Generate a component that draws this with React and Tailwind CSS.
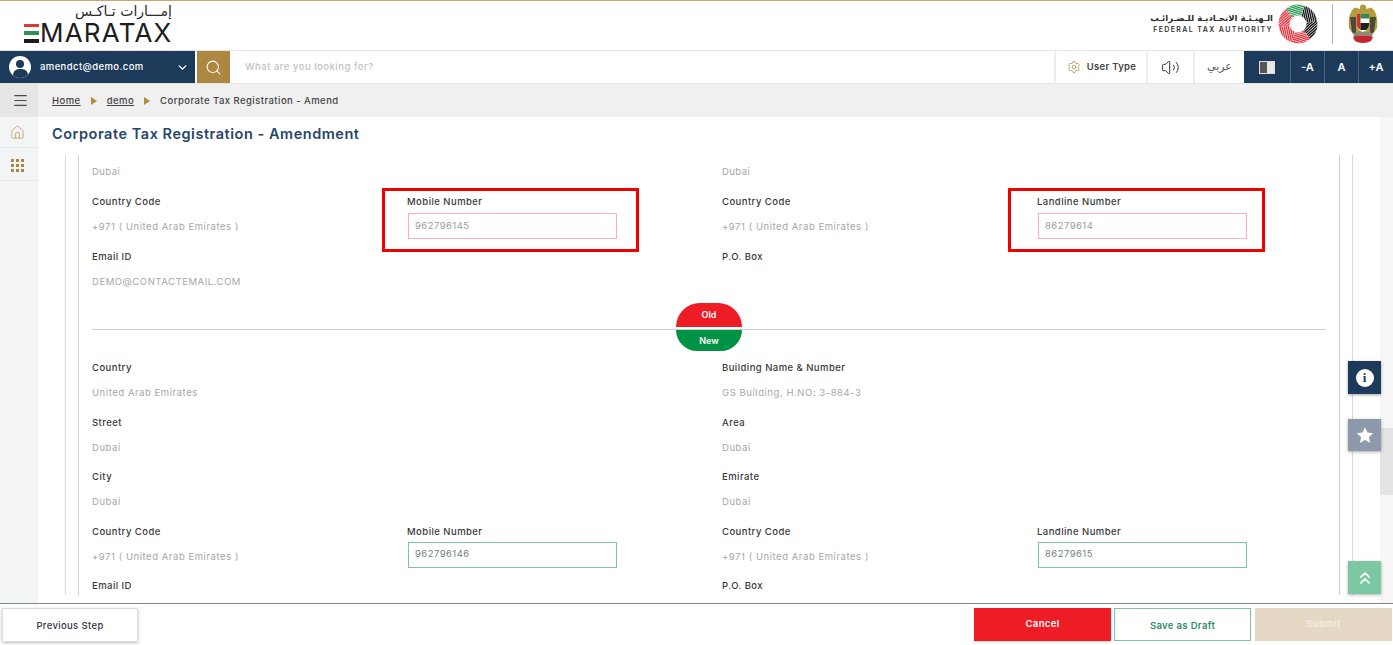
import React from "react";
import { ChevronDown, ChevronsUp, Home, Menu, Search, Settings, Volume2 } from "lucide-react";

const font = "font-['Inter','Liberation_Sans',sans-serif]";

function FtaRing() {
  // six striped sectors of the authority's ring
  const sectors = [
    { color: "#161616", rot: 20 },
    { color: "#161616", rot: 80 },
    { color: "#e8343f", rot: 140 },
    { color: "#e8343f", rot: 200 },
    { color: "#e8343f", rot: 260 },
    { color: "#2e9a5a", rot: 320 },
  ];
  const stripes = [-8, -6, -4, -2, 0, 2, 4, 6, 8, 10, 12, 14, 16, 18, 20, 22, 24, 26];
  return (
    <svg width="40" height="40" viewBox="0 0 40 40">
      <defs>
        <clipPath id="fta-sector">
          <path d="M20 20 L20 -6 L42.5 7 Z" />
        </clipPath>
        <clipPath id="fta-disc">
          <circle cx="20" cy="20" r="19.5" />
        </clipPath>
      </defs>
      <g clipPath="url(#fta-disc)">
        {sectors.map((s) => (
          <g key={s.rot} transform={`rotate(${s.rot} 20 20)`}>
            <g clipPath="url(#fta-sector)">
              <g transform="rotate(58 20 20)" stroke={s.color} strokeWidth="1.4">
                {stripes.map((y) => (
                  <path key={y} d={`M-10 ${y} H50`} />
                ))}
              </g>
            </g>
          </g>
        ))}
      </g>
      <circle cx="20" cy="20" r="8.5" fill="#ffffff" />
    </svg>
  );
}

function Emblem() {
  return (
    <svg width="32" height="40" viewBox="0 0 32 40">
      <path d="M16 0.5 C13.5 0.5 12.5 2.5 13 5 L8 3.5 C3 6.5 1 14 2 24 L6 30 L26 30 L30 24 C31 14 29 6.5 24 3.5 L19 5 C19.5 2.5 18.5 0.5 16 0.5 Z" fill="#b59a3f" />
      <path d="M3 13 L9 13 L9 30 L5 28 Z M29 13 L23 13 L23 30 L27 28 Z" fill="#4c4a38" />
      <path d="M10 10 H22 V21 C22 25 19 27 16 28 C13 27 10 25 10 21 Z" fill="#ffffff" />
      <path d="M10 10 H13.5 V26 C11.5 25 10 23 10 21 Z" fill="#cf2e2e" />
      <path d="M13.5 10 H22 V14.5 H13.5 Z" fill="#2e8b4f" />
      <path d="M13.5 19 H22 V21 C22 23 21 24.5 19.5 26 H13.5 Z" fill="#222222" />
      <path d="M6 29 C10 27.5 22 27.5 26 29 L25 33 C21 31 11 31 7 33 Z" fill="#8a8a7a" />
      <path d="M6 33 C11 31 21 31 26 33 L24 37 C20 39.5 12 39.5 8 37 Z" fill="#c0282d" />
    </svg>
  );
}

function Field({ label, value, input, highlight }) {
  return (
    <div className="relative h-[54.5px] pt-[3px]">
      {highlight && <div className={`absolute top-[-4px] w-[257px] h-[64px] border-[3px] border-[#f00000] ${highlight}`} />}
      {label && <div className="text-[9.5px] leading-[14px] tracking-[0.45px] text-[#3a3a3a] font-medium">{label}</div>}
      {input === "old" && (
        <div className="mt-[4px] ml-px w-[209px] h-[26px] border border-[#f7b0b5] flex items-center pl-[6px] text-[9.5px] tracking-[0.45px] text-[#9a9a9a]">
          {value}
        </div>
      )}
      {input === "new" && (
        <div className="mt-[3px] ml-px w-[209px] h-[26px] border border-[#7cc4a2] flex items-center pl-[6px] text-[9.5px] tracking-[0.45px] text-[#6f7f7a]">
          {value}
        </div>
      )}
      {!input && value && <div className="mt-[11px] text-[9.5px] leading-[14px] tracking-[0.55px] text-[#a6a6a6]">{value}</div>}
    </div>
  );
}

function Row({ children }) {
  return <div className="grid grid-cols-[315px_315px_315px_1fr]">{children}</div>;
}

function Contact({ mobile, landline, kind, highlight }) {
  return (
    <Row>
      <Field label="Country Code" value="+971 ( United Arab Emirates )" />
      <Field label="Mobile Number" value={mobile} input={kind} highlight={highlight ? "left-[-25px]" : null} />
      <Field label="Country Code" value="+971 ( United Arab Emirates )" />
      <Field label="Landline Number" value={landline} input={kind} highlight={highlight ? "left-[-29px]" : null} />
    </Row>
  );
}

export default function App() {
  return (
    <div className={`${font} relative w-[1393px] h-[645px] overflow-hidden bg-white flex flex-col`}>
      <div className="h-px bg-[#c9a671]" />

      {/* logos */}
      <header className="h-[49px] flex justify-between pl-[24px] pr-[14px]">
        <div className="w-[148px] pt-[3px] flex flex-col items-end">
          <div className="font-['DejaVu_Sans',sans-serif] text-[14px] leading-[14px] text-[#2b2b2b]" dir="rtl">
            إمـــارات تـاكـس
          </div>
          <div className="mt-[3px] flex items-center h-[24px] w-full">
            <div className="w-[15px] h-[19px] flex flex-col justify-between mr-px shrink-0">
              <div className="h-[3.5px] bg-[#e0343c]" />
              <div className="h-[3.5px] bg-[#2f8f55]" />
              <div className="h-[3.5px] bg-[#1c1c1c]" />
            </div>
            <span className="text-[26px] leading-[20px] font-normal tracking-[1.2px] text-[#1c1c1c]">MARATAX</span>
          </div>
        </div>
        <div className="flex items-center pb-[4px]">
          <div className="mr-[5px] flex flex-col items-end">
            <div className="font-['DejaVu_Sans',sans-serif] text-[8.5px] leading-[13px] text-[#2b2b2b] font-bold" dir="rtl">
              الـهيـئـة الاتحـاديـة للـضـرائـب
            </div>
            <div className="text-[7px] leading-[10px] font-semibold tracking-[1.4px] text-[#333]">FEDERAL TAX AUTHORITY</div>
          </div>
          <FtaRing />
          <div className="w-px h-[40px] bg-[#b5b5b5] mx-[14px]" />
          <Emblem />
        </div>
      </header>

      {/* top bar */}
      <nav className="h-[34px] flex border-y border-[#e3e3e3] bg-white text-[9.5px]">
        <div className="w-[195px] bg-[#1e3a5a] flex items-center pl-[9px] pr-[6px] text-white">
          <div className="w-[22px] h-[22px] rounded-full bg-white relative overflow-hidden shrink-0">
            <div className="absolute left-[7px] top-[3.5px] w-[8px] h-[8px] rounded-full bg-[#1e3a5a]" />
            <div className="absolute left-[3.5px] top-[13px] w-[15px] h-[12px] rounded-full bg-[#1e3a5a]" />
          </div>
          <span className="ml-[9px] pt-px tracking-[0.4px] font-medium">amendct@demo.com</span>
          <ChevronDown size={13} strokeWidth={2.5} className="ml-auto" />
        </div>
        <div className="ml-[2px] w-[33px] bg-[#ad873f] flex items-center justify-center">
          <Search size={17} strokeWidth={1.5} className="text-white" />
        </div>
        <div className="flex-1 flex items-center pl-[15px] pt-px text-[#c3c3c3] tracking-[0.5px] font-medium">What are you looking for?</div>
        <div className="w-[94px] pl-px border-x-2 border-[#eeeeee] flex items-center justify-center gap-[6px] text-[#444] font-semibold tracking-[0.3px]">
          <Settings size={14} strokeWidth={1.25} className="text-[#ad873f]" />
          <span>User Type</span>
        </div>
        <div className="w-[47px] border-r-2 border-[#eeeeee] flex items-center justify-center">
          <Volume2 size={19} strokeWidth={1.25} className="text-[#333]" />
        </div>
        <div className="w-[49px] flex items-center justify-center font-['DejaVu_Sans',sans-serif] text-[11px] text-[#555]">عربي</div>
        <div className="w-[46px] bg-[#1e3a5a] flex items-center justify-center">
          <div className="w-[16px] h-[13px] flex border border-[#dddddd]">
            <div className="w-1/2 bg-[#555555]" />
            <div className="w-1/2 bg-[#e8e8e8]" />
          </div>
        </div>
        {["-A", "A"].map((t) => (
          <div key={t} className="w-[34px] bg-[#1e3a5a] border-l border-[#4d6580] flex items-center justify-center text-white text-[11px] font-semibold">
            {t}
          </div>
        ))}
        <div className="w-[35px] bg-[#1e3a5a] border-l border-[#4d6580] flex items-center justify-center text-white text-[11px] font-semibold">
          +A
        </div>
      </nav>

      <div className="flex-1 flex min-h-0">
        {/* sidebar */}
        <aside className="w-[38px] bg-[#f2f4f5] flex flex-col">
          <div className="h-[33px] pl-[2px] bg-[#e6e6e6] flex items-center justify-center">
            <Menu size={17} strokeWidth={1.75} className="text-[#4a4a4a]" />
          </div>
          <div className="h-[31px] pr-[3px] border-b border-[#e6e8e9] flex items-center justify-center">
            <Home size={15} strokeWidth={1.5} className="text-[#c9a671]" />
          </div>
          <div className="h-[33px] pt-[3px] pr-[3px] border-b border-[#e6e8e9] flex items-center justify-center">
            <div className="grid grid-cols-3 gap-[1.5px]">
              {Array.from({ length: 9 }).map((_, i) => (
                <div key={i} className="w-[3.5px] h-[3.5px] bg-[#ad873f]" />
              ))}
            </div>
          </div>
        </aside>

        <main className="flex-1 flex flex-col min-w-0">
          <div className="h-[33px] pt-px bg-[#f0f0f0] flex items-center pl-[14px] text-[9.5px] tracking-[0.45px] text-[#444] font-medium">
            <span className="underline">Home</span>
            <span className="mx-[10px] w-0 h-0 border-y-[4px] border-y-transparent border-l-[6px] border-l-[#b58c3f]" />
            <span className="underline">demo</span>
            <span className="mx-[10px] w-0 h-0 border-y-[4px] border-y-transparent border-l-[6px] border-l-[#b58c3f]" />
            <span>Corporate Tax Registration - Amend</span>
          </div>

          <div className="flex-1 flex min-h-0">
            <div className="flex-1 min-w-0 flex flex-col">
              <h1 className="h-[38px] pl-[14px] pb-[4px] flex items-center text-[14.5px] font-semibold tracking-[0.53px] text-[#264769]">
                Corporate Tax Registration - Amendment
              </h1>
              <div className="ml-[27px] w-[1288px] h-[440px] border-x border-[#d9d9d9] pl-[12px] pr-[12px] overflow-hidden">
                <div className="h-full border-x border-[#d0d0d0] pl-[13px] pr-[13px]">
                  <div className="h-[37px] pt-[10px]">
                    <Row>
                      <div className="text-[9.5px] leading-[14px] tracking-[0.45px] text-[#a6a6a6]">Dubai</div>
                      <div />
                      <div className="text-[9.5px] leading-[14px] tracking-[0.45px] text-[#a6a6a6]">Dubai</div>
                      <div />
                    </Row>
                  </div>
                  <Contact mobile="962796145" landline="86279614" kind="old" highlight />
                  <Row>
                    <Field label="Email ID" value="DEMO@CONTACTEMAIL.COM" />
                    <div />
                    <Field label="P.O. Box" />
                    <div />
                  </Row>

                  {/* old / new divider */}
                  <div className="relative h-[57px] flex items-center">
                    <div className="w-full h-px bg-[#cfcfcf]" />
                    <div className="absolute left-[584px] top-[2px] w-[66px] h-[24px] rounded-t-[24px] bg-[#ee1c25] flex items-center justify-center text-white text-[9px] font-semibold">
                      Old
                    </div>
                    <div className="absolute left-[584px] top-[29px] w-[66px] h-[21px] rounded-b-[24px] bg-[#009245] flex items-center justify-center text-white text-[9px] font-semibold">
                      New
                    </div>
                  </div>

                  <Row>
                    <Field label="Country" value="United Arab Emirates" />
                    <div />
                    <Field label="Building Name & Number" value="GS Building, H.NO: 3-884-3" />
                    <div />
                  </Row>
                  <Row>
                    <Field label="Street" value="Dubai" />
                    <div />
                    <Field label="Area" value="Dubai" />
                    <div />
                  </Row>
                  <Row>
                    <Field label="City" value="Dubai" />
                    <div />
                    <Field label="Emirate" value="Dubai" />
                    <div />
                  </Row>
                  <Contact mobile="962796146" landline="86279615" kind="new" />
                  <Row>
                    <Field label="Email ID" />
                    <div />
                    <Field label="P.O. Box" />
                    <div />
                  </Row>
                </div>
              </div>
            </div>

            {/* scrollbar */}
            <div className="w-[13px] bg-[#f6f6f6] flex flex-col">
              <div className="mt-[311px] h-[67px] bg-[#e4e4e4]" />
            </div>
          </div>
        </main>
      </div>

      {/* bottom actions */}
      <footer className="h-[42px] border-t border-[#7a8a8c] flex items-center pl-[2px] pr-[1px] text-[9.5px] tracking-[0.35px]">
        <button className="w-[136px] h-[34px] pt-[3px] bg-white border border-[#dddddd] shadow-[0_1px_3px_rgba(0,0,0,0.25)] font-medium text-[#33383d]">Previous Step</button>
        <button className="ml-auto w-[137px] h-[33px] bg-[#ee1c25] text-white font-semibold shadow-[0_1px_2px_rgba(0,0,0,0.2)]">Cancel</button>
        <button className="ml-[3px] w-[137px] h-[33px] pt-[3px] bg-white border border-[#7cc4a2] font-semibold text-[#2f8f66]">Save as Draft</button>
        <button className="ml-[4px] w-[137px] h-[33px] bg-[#e4d8c5] font-semibold text-[#f3ede3]">Submit</button>
      </footer>

      {/* floating quick actions */}
      <div className="absolute left-[1348px] top-[361px] w-[33px] h-[33px] bg-[#1e3a5a] shadow-[0_1px_3px_rgba(0,0,0,0.35)] flex items-center justify-center">
        <div className="w-[18px] h-[18px] rounded-full bg-white flex items-center justify-center font-['Liberation_Serif',serif] text-[13px] font-bold text-[#1e3a5a]">i</div>
      </div>
      <div className="absolute left-[1348px] top-[419px] w-[33px] h-[32px] bg-[#8c9aab] shadow-[0_1px_3px_rgba(0,0,0,0.35)] flex items-center justify-center">
        <svg width="18" height="18" viewBox="0 0 24 24" fill="white">
          <path d="M12 1.5 L15.2 8.6 L23 9.5 L17.2 14.8 L18.8 22.5 L12 18.6 L5.2 22.5 L6.8 14.8 L1 9.5 L8.8 8.6 Z" />
        </svg>
      </div>
      <div className="absolute left-[1348px] top-[561px] w-[33px] h-[33px] bg-[#7cc8a4] shadow-[0_1px_3px_rgba(0,0,0,0.3)] flex items-center justify-center">
        <ChevronsUp size={20} strokeWidth={2} className="text-white" />
      </div>
    </div>
  );
}
